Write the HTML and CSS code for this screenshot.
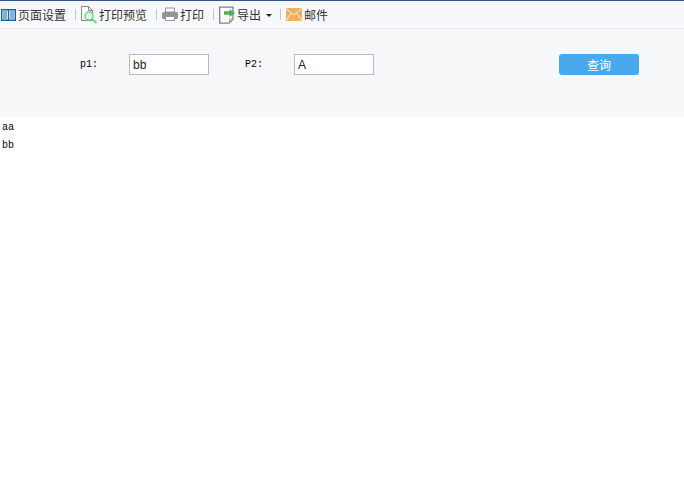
FILE: index.html
```html
<!DOCTYPE html>
<html lang="zh">
<head>
<meta charset="utf-8">
<title>报表</title>
<link rel="stylesheet" href="styles.css">
</head>
<body>
<div class="toolbar">
  <div class="tool tool-setup">
    <svg class="icon" width="15" height="12" viewBox="0 0 15 12"><path d="M.7.700h13.600v10.600H.7z" fill="#fff" stroke="#0f64a8" stroke-width="1.400"/><path d="M7.500 1v10" stroke="#0f64a8" stroke-width="1.400"/><path d="M2 3h4M2 5h4M2 7h4M2 9h4M9 3h4M9 5h4M9 7h4M9 9h4" stroke="#0f64a8"/></svg>
    <span>页面设置</span>
  </div>
  <i class="sep"></i>
  <div class="tool tool-preview">
    <svg class="icon" width="17" height="18" viewBox="0 0 17 18"><path d="M.5.500h7l4 4v10H.5z" fill="#fff" stroke="#8a8a8a"/><path d="M7.500.500v4h4" fill="none" stroke="#8a8a8a"/><circle cx="8" cy="10" r="4" fill="#e8f4ee" stroke="#5fdc7c" stroke-width="1.500"/><path d="M11 13l4.500 4" stroke="#5fdc7c" stroke-width="2"/></svg>
    <span>打印预览</span>
  </div>
  <i class="sep"></i>
  <div class="tool">
    <svg class="icon" width="16" height="15" viewBox="0 0 16 15"><path d="M3.500 1h9v4h-9z" fill="#fff" stroke="#949494"/><rect x="0" y="5" width="16" height="7" rx="1.500" fill="#949494"/><path d="M3.500 9.500h9v4h-9z" fill="#fff" stroke="#949494"/></svg>
    <span>打印</span>
  </div>
  <i class="sep"></i>
  <div class="tool">
    <svg class="icon" width="16" height="18" viewBox="0 0 16 18"><path d="M.7 1.200h13.300v12l-4 4H.7z" fill="#fff" stroke="#808080" stroke-width="1.300"/><path d="M10.500 17v-4h3.500" fill="none" stroke="#a0a0a0"/><path d="M5 5.200h5.500V3l5.500 4-5.500 4V8.800H5z" fill="#4cae4f"/></svg>
    <span>导出</span>
    <i class="caret"></i>
  </div>
  <i class="sep"></i>
  <div class="tool">
    <svg class="icon" width="16" height="13" viewBox="0 0 16 13"><rect width="16" height="13" fill="#edb25f"/><path d="M0 .5l8 6.500 8-6.500M0 12.500l5.500-7.500M16 12.500L10.500 5" fill="none" stroke="#fff" stroke-width=".8"/></svg>
    <span>邮件</span>
  </div>
</div>
<form class="params">
  <label class="param-label label-one">p1:</label>
  <input class="param-input" type="text" value="bb">
  <label class="param-label label-two">P2:</label>
  <input class="param-input" type="text" value="A">
  <button class="query" type="button">查询</button>
</form>
<div class="report">
  <div class="row">aa</div>
  <div class="row">bb</div>
</div>
</body>
</html>
```
FILE: styles.css
```css
* { box-sizing: border-box; }
html, body { margin: 0; padding: 0; background: #fff; }
body {
  width: 684px;
  height: 480px;
  overflow: hidden;
  font-family: "Noto Sans CJK SC", "Liberation Sans", sans-serif;
  color: #333;
}
.toolbar {
  height: 29px;
  display: flex;
  align-items: center;
  background: #f7f8fa;
  border-top: 1px solid #33557f;
  border-bottom: 1px solid #e6e8ec;
  font-size: 12px;
  line-height: 16px;
}
.tool { display: flex; align-items: center; gap: 2px; white-space: nowrap; }
.tool-setup { margin-left: 1px; }
.tool-preview { gap: 1px; }
.icon { flex: none; }
.sep { width: 1px; height: 11px; margin: 0 5px 0 9px; background: #c4c6ca; flex: none; }
.caret {
  width: 0; height: 0; margin: 2px -1px 0 3px;
  border-left: 3px solid transparent;
  border-right: 3px solid transparent;
  border-top: 3px solid #222;
}
.params {
  height: 88px;
  display: flex;
  align-items: flex-start;
  padding-top: 25px;
  background: #f6f7f9;
}
.param-label {
  font-family: "Liberation Mono", monospace;
  font-size: 10px;
  line-height: 21px;
  color: #000;
}
.label-one { margin-left: 80px; width: 49px; }
.label-two { margin-left: 36px; width: 49px; }
.param-input {
  width: 80px;
  height: 21px;
  padding: 0 3px;
  border: 1px solid #b4b9ca;
  background: #fff;
  font-family: "Liberation Sans", sans-serif;
  font-size: 12px;
  color: #222;
  outline: none;
}
.query {
  width: 80px;
  height: 21px;
  margin-left: 185px;
  padding: 0;
  border: 0;
  border-radius: 3px;
  background: #4aa9ec;
  color: #fff;
  font-family: "Noto Sans CJK SC", sans-serif;
  font-size: 12px;
}
.report { padding-left: 2px; padding-top: 2px; }
.row {
  height: 18px;
  font-family: "Liberation Mono", monospace;
  font-size: 10px;
  line-height: 18px;
  color: #000;
}
```
